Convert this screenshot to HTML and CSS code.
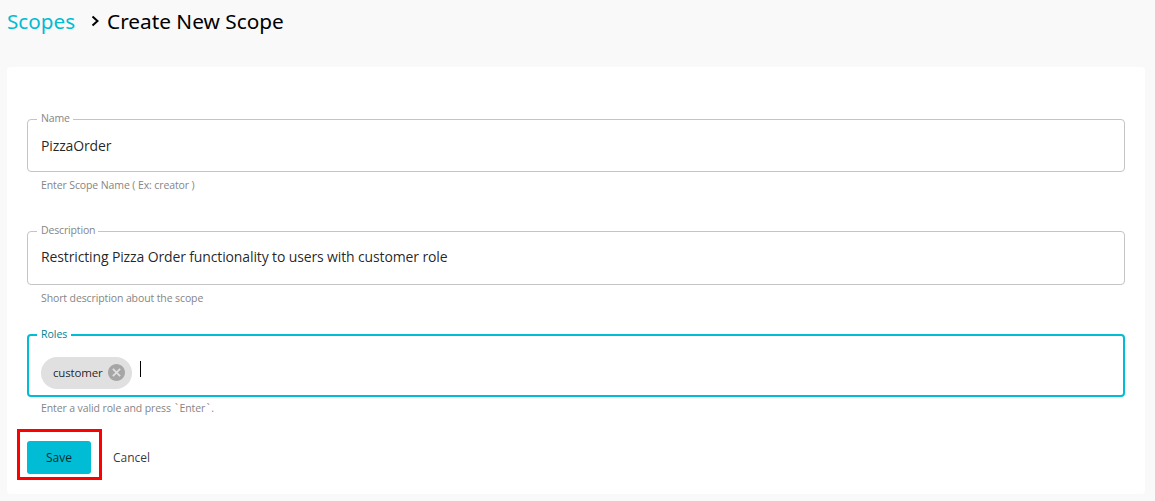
FILE: index.html
```html
<!DOCTYPE html>
<html lang="en">
<head>
<meta charset="utf-8">
<title>Create New Scope</title>
<link rel="stylesheet" href="styles.css">
</head>
<body>
<header class="breadcrumb">
  <a class="breadcrumb-link">Scopes</a>
  <svg class="breadcrumb-arrow" width="10" height="14" viewBox="0 0 10 14"><path d="M2.5 2.5 7.5 7 2.5 11.5" fill="none" stroke="#000" stroke-width="2"/></svg>
  <h1 class="breadcrumb-title">Create New Scope</h1>
</header>
<main class="card">
  <div class="field field-name">
    <div class="outline"><span class="label">Name</span><span class="value">PizzaOrder</span></div>
    <p class="helper">Enter Scope Name ( Ex: creator )</p>
  </div>
  <div class="field field-description">
    <div class="outline"><span class="label">Description</span><span class="value">Restricting Pizza Order functionality to users with customer role</span></div>
    <p class="helper">Short description about the scope</p>
  </div>
  <div class="field field-roles">
    <div class="outline"><span class="label">Roles</span>
      <span class="chip"><span class="chip-text">customer</span><svg width="17" height="17" viewBox="2 2 20 20"><path fill="#a6a6a6" d="M12 2C6.47 2 2 6.47 2 12s4.47 10 10 10 10-4.47 10-10S17.53 2 12 2zm5 13.59L15.59 17 12 13.41 8.41 17 7 15.59 10.59 12 7 8.41 8.41 7 12 10.59 15.59 7 17 8.41 13.41 12 17 15.59z"/></svg></span>
      <span class="caret"></span>
    </div>
    <p class="helper">Enter a valid role and press <span class="tick">`</span>Enter<span class="tick">`</span>.</p>
  </div>
  <div class="actions">
    <div class="highlight"><button class="save">Save</button></div>
    <button class="cancel">Cancel</button>
  </div>
</main>
</body>
</html>
```
FILE: styles.css
```css
* { box-sizing: border-box; }
body {
  margin: 0;
  height: 501px;
  overflow: hidden;
  background: #f9f9f9;
  font-family: "Open Sans", "Noto Sans", sans-serif;
  color: rgba(0, 0, 0, 0.87);
}
.breadcrumb {
  display: flex;
  align-items: center;
  height: 67px;
  padding: 0 0 26px 7px;
  font-family: "Noto Sans", "Open Sans", sans-serif;
}
.breadcrumb-link { width: 83px; font-size: 20.7px; color: #00bcd4; }
.breadcrumb-arrow { margin-right: 7px; }
.breadcrumb-title { margin: 0; font-size: 20.8px; font-weight: 400; color: #000; }
.card {
  width: 1138px;
  height: 427px;
  margin-left: 7px;
  padding: 52px 20px 0;
  background: #fff;
  border-radius: 4px;
}
.outline {
  position: relative;
  display: flex;
  align-items: center;
  border: 1px solid #c4c4c4;
  border-radius: 4px;
  padding-left: 13px;
}
.field-name { height: 112px; }
.field-name .outline { height: 53px; }
.field-description { height: 103px; }
.field-description .outline { height: 54px; padding-bottom: 2px; }
.field-roles { height: 95px; }
.field-roles .outline {
  height: 63px;
  border: 2px solid #00bcd4;
  padding: 14px 0 0 12px;
}
.label {
  position: absolute;
  top: -10px;
  left: 9px;
  padding: 0 3px 0 4px;
  background: #fff;
  font-size: 10.5px;
  letter-spacing: -0.15px;
  line-height: 17px;
  color: #858585;
}
.field-roles .label { left: 8px; padding-right: 4px; letter-spacing: 0; color: #00838f; }
.value { font-size: 14px; letter-spacing: -0.13px; line-height: 20px; }
.helper {
  margin: 5px 0 0 14px;
  font-size: 10.5px;
  letter-spacing: -0.11px;
  line-height: 16px;
  color: #858585;
}
.field-roles .helper { margin-top: 3px; }
.tick { display: inline-block; width: 6px; text-align: center; }
.chip {
  display: flex;
  align-items: center;
  gap: 4px;
  width: 91px;
  height: 32px;
  padding-left: 12px;
  border-radius: 16px;
  background: #e0e0e0;
}
.chip-text { width: 51px; font-size: 11.5px; letter-spacing: -0.15px; }
.caret { width: 1px; height: 16px; margin: 0 0 7px 8px; background: #000; }
.actions { display: flex; align-items: center; margin-left: -10px; }
.highlight {
  width: 85px;
  height: 51px;
  border: 3px solid #f00;
  padding: 9px 0 0 7px;
}
.save, .cancel {
  border: 0;
  padding: 0;
  font-family: inherit;
  font-size: 12px;
  line-height: 16px;
  color: rgba(0, 0, 0, 0.8);
}
.save {
  display: block;
  width: 64px;
  height: 33px;
  border-radius: 3px;
  background: #00bcd4;
}
.cancel { margin: 6px 0 0 11px; background: transparent; }
```
